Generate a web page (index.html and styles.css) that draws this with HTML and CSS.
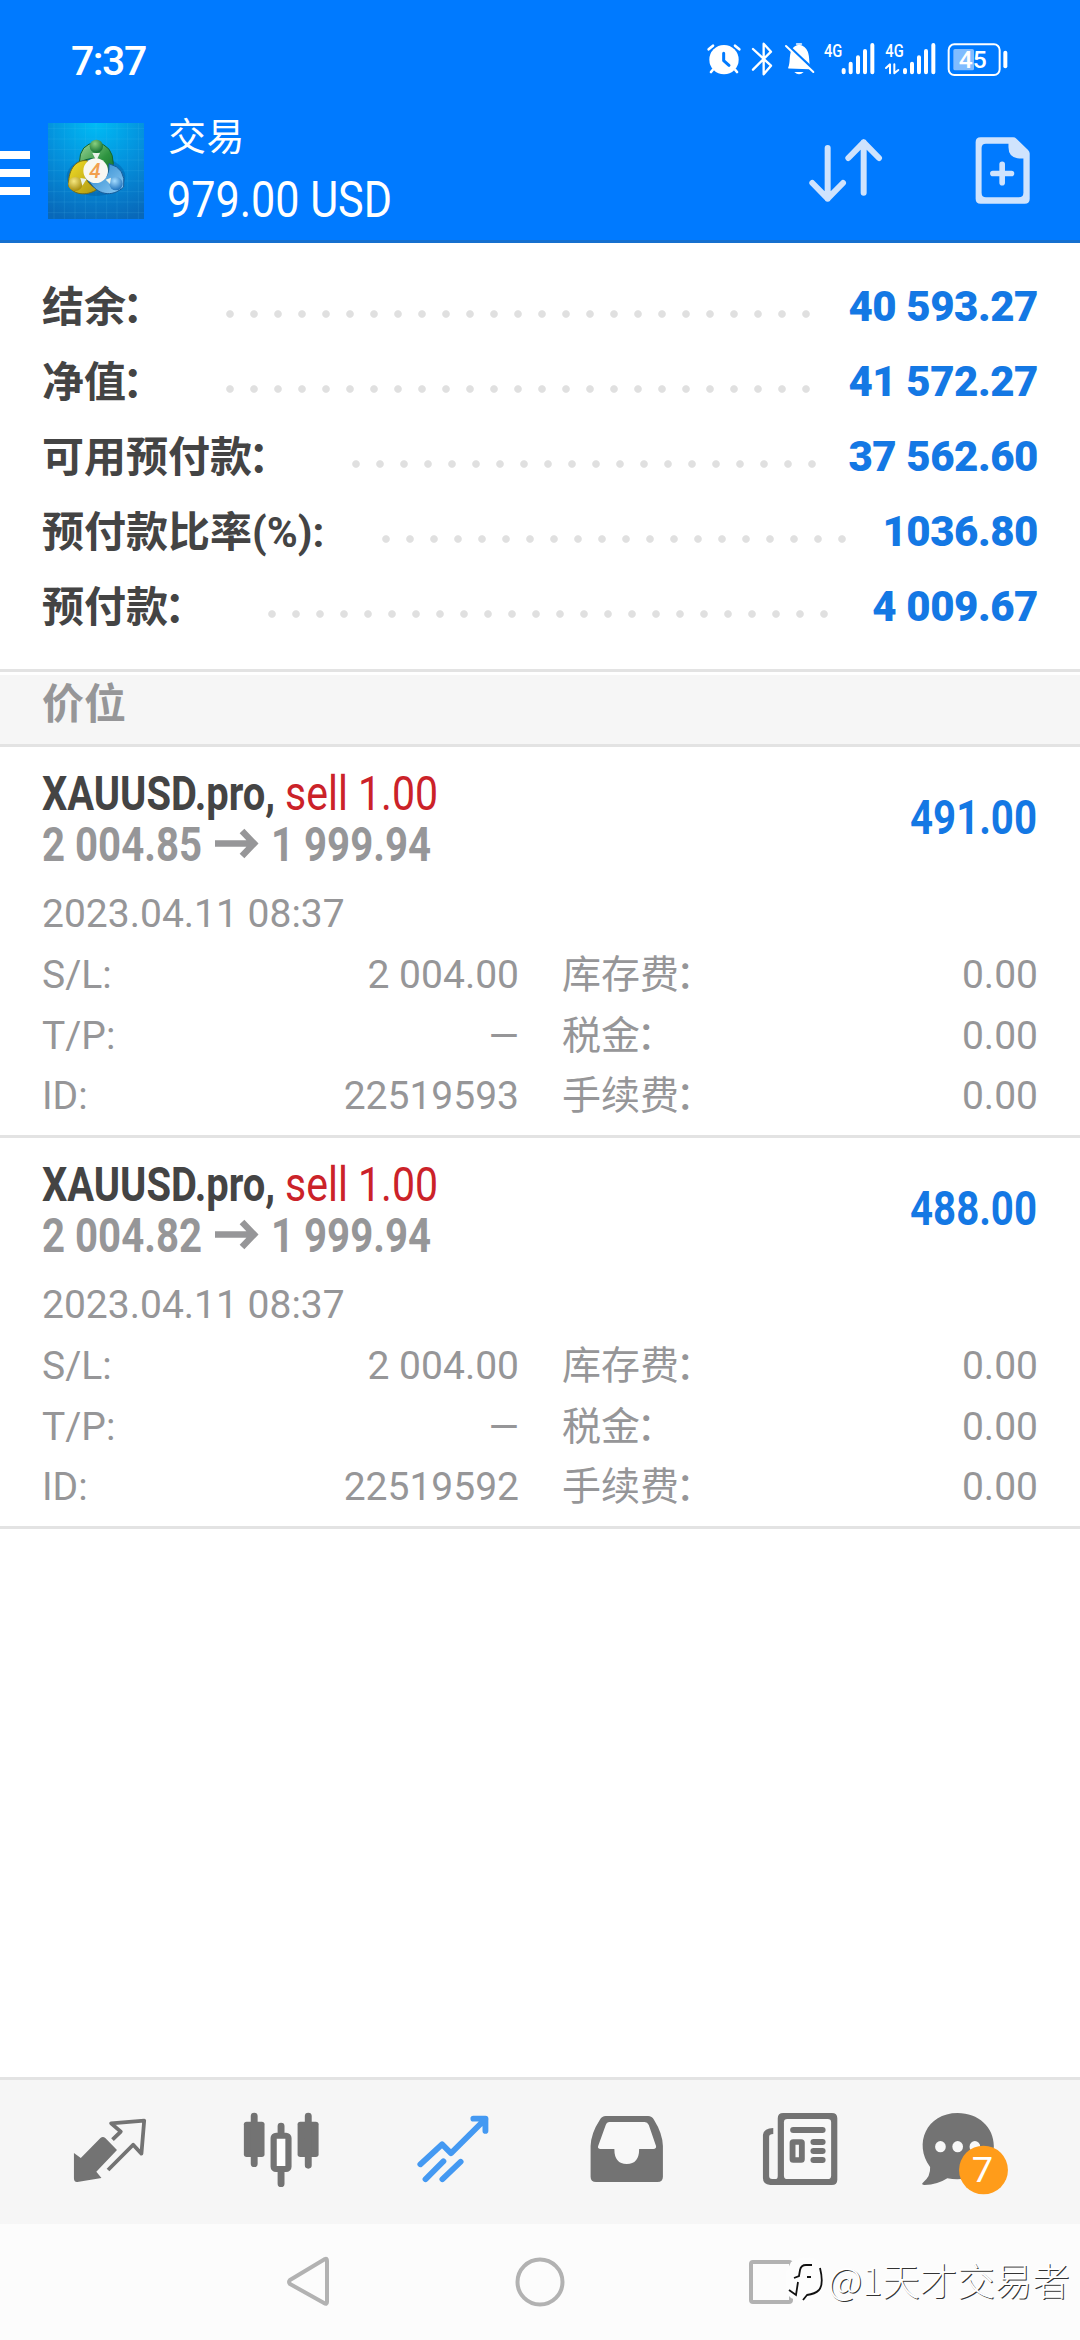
FILE: index.html
```
<!DOCTYPE html>
<html lang="zh-CN">
<head>
<meta charset="utf-8">
<title>交易</title>
<link rel="stylesheet" href="styles.css">
</head>
<body>
<div class="screen">
  <header class="header">
    <div class="status">
      <span class="clock">7:37</span>
      <svg class="status-icons" viewBox="78 60 912 114">
        <g fill="none" stroke="#fff" stroke-linecap="round" stroke-linejoin="round">
          <circle cx="132" cy="119" r="44" fill="#fff" stroke="none"/>
          <path d="M86 88L99 77M178 88L165 77M98 150L93 156M166 150L171 156" stroke-width="8"/>
          <path d="M131 100V122L147 136" stroke="#007aff" stroke-width="9"/>
          <path d="M219 87L273 137L251 163V71L273 95L219 149" stroke-width="7"/>
          <path d="M327 143C337 126 322 84 357 77C393 84 382 123 388 145Z" fill="#fff" stroke="#fff" stroke-width="5"/>
          <path d="M350 72H364" stroke-width="5"/>
          <path d="M343 156H371Q357 170 343 156Z" fill="#fff" stroke="none"/>
          <path d="M316 70L408 156" stroke="#007aff" stroke-width="9" stroke-linecap="butt"/>
          <path d="M318 78L400 156" stroke-width="6"/>
          <path d="M491 150V157M512 131V157M534 112V157M555 93V157M577 75V157M675 150V157M696 131V157M717 112V157M738 93V157M760 75V157" stroke-width="12"/>
          <path d="M618 144L630 133V160M643 133V160L655 150" stroke-width="6"/>
          <rect x="806" y="73" width="153" height="92" rx="17" stroke-width="6"/>
          <path d="M976 98V139" stroke-width="12"/>
        </g>
        <rect x="820" y="87" width="62" height="64" rx="5" fill="#80bcff"/>
        <g fill="#fff" font-family="Roboto, sans-serif" font-weight="500">
          <text x="432" y="111" font-size="53" textLength="55" lengthAdjust="spacingAndGlyphs">4G</text>
          <text x="616" y="111" font-size="53" textLength="55" lengthAdjust="spacingAndGlyphs">4G</text>
          <text x="836" y="143" font-size="70" textLength="84" lengthAdjust="spacingAndGlyphs">45</text>
        </g>
      </svg>
    </div>
    <div class="toolbar">
      <div class="menu"><i></i><i></i><i></i></div>
      <svg class="logo" viewBox="54 39 288 288">
        <defs>
          <radialGradient id="sky" cx=".5" cy="0" r="1.05"><stop offset="0" stop-color="#00bcf5"/><stop offset=".5" stop-color="#0490dc"/><stop offset="1" stop-color="#0868b9"/></radialGradient>
          <linearGradient id="green" x2="1" y2="1"><stop offset="0" stop-color="#9fd79b"/><stop offset=".6" stop-color="#2e9440"/><stop offset="1" stop-color="#17702c"/></linearGradient>
          <linearGradient id="gold" x2="1" y2="1"><stop offset="0" stop-color="#f3df28"/><stop offset="1" stop-color="#ac9510"/></linearGradient>
          <linearGradient id="blue" x2="1" y2="1"><stop offset="0" stop-color="#2482cb"/><stop offset="1" stop-color="#90cdf5"/></linearGradient>
          <radialGradient id="ballg" cx=".4" cy=".3" r=".7"><stop offset="0" stop-color="#8ad080"/><stop offset="1" stop-color="#147130"/></radialGradient>
          <radialGradient id="bally" cx=".4" cy=".3" r=".7"><stop offset="0" stop-color="#f6e880"/><stop offset="1" stop-color="#a78d0d"/></radialGradient>
          <radialGradient id="ballb" cx=".4" cy=".3" r=".7"><stop offset="0" stop-color="#a4dcff"/><stop offset="1" stop-color="#2174be"/></radialGradient>
        </defs>
        <path fill="url(#sky)" d="M54 39h288v288H54z"/>
        <path d="M72 39v288M103 39v288M135 39v288M166 39v288M198 39v288M230 39v288M261 39v288M293 39v288M325 39v288M54 55h288M54 87h288M54 118h288M54 150h288M54 182h288M54 213h288M54 245h288M54 276h288M54 308h288" stroke="#5bc8f2" stroke-opacity=".14" stroke-width="3"/>
        <ellipse cx="198" cy="200" rx="88" ry="58" fill="#034d91" opacity=".35"/>
        <path d="M148 158Q149 100 199 98Q249 105 250 161L237 193L215 154Q187 135 148 158Z" fill="url(#green)" stroke="#12652e" stroke-width="3"/>
        <path d="M173 152C132 147 113 187 116 229C140 265 188 250 202 237Q168 223 166 192Z" fill="url(#gold)" stroke="#736b15" stroke-width="3"/>
        <path d="M237 161Q289 174 281 231C244 265 202 253 178 215L210 214Q240 202 237 161Z" fill="url(#blue)" stroke="#155a98" stroke-width="3"/>
        <circle cx="199" cy="109" r="20" fill="url(#ballg)"/>
        <circle cx="136" cy="222" r="21" fill="url(#bally)"/>
        <circle cx="258" cy="221" r="20" fill="url(#ballb)"/>
        <path d="M187 129H210L199 152ZM151 204L157 227L170 207ZM227 209L243 203L240 222Z" fill="#e9f2e8"/>
        <circle cx="197" cy="182" r="37" fill="#f8f7f2"/>
        <text x="178" y="205" font-family="Roboto, sans-serif" font-size="62" font-weight="500" font-style="italic" fill="#f2a04f">4</text>
      </svg>
      <div class="heading">
        <div class="title">交易</div>
        <svg class="profit-total" viewBox="0 0 224 50"><text x="-1" y="43" font-size="50" textLength="225" lengthAdjust="spacingAndGlyphs">979.00 USD</text></svg>
      </div>
      <svg class="sort-icon" viewBox="388 354 222 195" fill="none" stroke="#cfe3fd" stroke-width="18" stroke-linecap="round" stroke-linejoin="round">
        <path d="M444 384V536M398 489L444 536L490 489M552 518V367M506 414L552 367L598 414"/>
      </svg>
      <svg class="new-icon" viewBox="884 352 164 202">
        <path fill-rule="evenodd" fill="#cfe3fd" d="M900 353H998Q1004 353 1008 357L1043 391Q1048 396 1048 402V538Q1048 553 1033 553H900Q885 553 885 538V368Q885 353 900 353ZM916 372Q903 372 903 385V520Q903 534 916 534H1015Q1029 534 1029 520V417H1017Q984 415 984 383V372Z"/>
        <path d="M937 462H993M965 434V490" stroke="#cfe3fd" stroke-width="17" stroke-linecap="round"/>
      </svg>
    </div>
  </header>

  <section class="summary">
    <div class="sum-row"><span class="label">结余<i class="colon">：</i></span><div class="leader"><i></i></div><b>40 593.27</b></div>
    <div class="sum-row"><span class="label">净值<i class="colon">：</i></span><div class="leader"><i></i></div><b>41 572.27</b></div>
    <div class="sum-row"><span class="label">可用预付款<i class="colon">：</i></span><div class="leader"><i></i></div><b>37 562.60</b></div>
    <div class="sum-row"><span class="label">预付款比率(%):</span><div class="leader"><i></i></div><b>1036.80</b></div>
    <div class="sum-row"><span class="label">预付款<i class="colon">：</i></span><div class="leader"><i></i></div><b>4 009.67</b></div>
  </section>

  <h2 class="section-title">价位</h2>

  <article class="position">
    <div class="position-head">
      <svg class="deal" viewBox="42 0 400 100" font-size="48">
        <text class="symbol" x="42" y="47" textLength="233" lengthAdjust="spacingAndGlyphs">XAUUSD.pro,</text>
        <text class="side" x="285" y="47" textLength="153" lengthAdjust="spacingAndGlyphs">sell 1.00</text>
        <text class="price" x="42" y="98" textLength="160" lengthAdjust="spacingAndGlyphs">2 004.85</text>
        <path class="arrow" d="M215 80.500H254M242 68L254 80.500L242 93"/>
        <text class="price" x="271" y="98" textLength="160" lengthAdjust="spacingAndGlyphs">1 999.94</text>
      </svg>
      <svg class="profit" viewBox="0 0 128 50"><text x="0" y="41" font-size="48" textLength="127" lengthAdjust="spacingAndGlyphs">491.00</text></svg>
    </div>
    <div class="date">2023.04.11 08:37</div>
    <div class="details">
      <div><span>S/L:</span><span>2 004.00</span></div><div><span>库存费<i class="colon">：</i></span><span>0.00</span></div>
      <div><span>T/P:</span><span>—</span></div><div><span>税金<i class="colon">：</i></span><span>0.00</span></div>
      <div><span>ID:</span><span>22519593</span></div><div><span>手续费<i class="colon">：</i></span><span>0.00</span></div>
    </div>
  </article>

  <article class="position">
    <div class="position-head">
      <svg class="deal" viewBox="42 0 400 100" font-size="48">
        <text class="symbol" x="42" y="47" textLength="233" lengthAdjust="spacingAndGlyphs">XAUUSD.pro,</text>
        <text class="side" x="285" y="47" textLength="153" lengthAdjust="spacingAndGlyphs">sell 1.00</text>
        <text class="price" x="42" y="98" textLength="160" lengthAdjust="spacingAndGlyphs">2 004.82</text>
        <path class="arrow" d="M215 80.500H254M242 68L254 80.500L242 93"/>
        <text class="price" x="271" y="98" textLength="160" lengthAdjust="spacingAndGlyphs">1 999.94</text>
      </svg>
      <svg class="profit" viewBox="0 0 128 50"><text x="0" y="41" font-size="48" textLength="127" lengthAdjust="spacingAndGlyphs">488.00</text></svg>
    </div>
    <div class="date">2023.04.11 08:37</div>
    <div class="details">
      <div><span>S/L:</span><span>2 004.00</span></div><div><span>库存费<i class="colon">：</i></span><span>0.00</span></div>
      <div><span>T/P:</span><span>—</span></div><div><span>税金<i class="colon">：</i></span><span>0.00</span></div>
      <div><span>ID:</span><span>22519592</span></div><div><span>手续费<i class="colon">：</i></span><span>0.00</span></div>
    </div>
  </article>

  <nav class="tabs">
    <svg viewBox="70 60 500 432" preserveAspectRatio="none">
      <path d="M215 279L235 294L292 234Q299 228 306 234L340 270L280 335L295 354L225 366Q215 367 215 355Z" fill="#737373"/>
      <path d="M327 239L351 215L323 190L419 182L411 281L387 254L314 330" fill="none" stroke="#737373" stroke-width="11" stroke-linejoin="round"/>
    </svg>
    <svg viewBox="570 60 500 432" preserveAspectRatio="none">
      <g fill="#737373"><rect x="709" y="185" width="60" height="106" rx="8"/><rect x="865" y="185" width="61" height="106" rx="8"/></g>
      <path d="M739 168V311M896 168V316M817 198V225M817 330V371" stroke="#737373" stroke-width="20" stroke-linecap="round"/>
      <rect x="795.500" y="227" width="43" height="100" rx="7" fill="#fff" stroke="#737373" stroke-width="18"/>
    </svg>
    <svg viewBox="1070 60 500 432" preserveAspectRatio="none" fill="none" stroke="#4499f2" stroke-width="17" stroke-linecap="round" stroke-linejoin="round">
      <path d="M1222 313L1285 253L1311 280L1411 177M1376 176H1411V213"/>
      <path d="M1237 358L1289 304M1286 358L1339 305"/>
    </svg>
    <svg viewBox="2 60 500 432" preserveAspectRatio="none">
      <path d="M190 168H313Q324 168 330 179Q355 220 356 258V350Q356 366 340 366H162Q146 366 146 350V258Q147 220 173 179Q179 168 190 168Z" fill="#737373"/>
      <path d="M201 186H303Q311 186 315 195L336 258Q338 266 328 267H287Q287 312 251 312Q215 312 215 267H175Q165 266 168 258L190 195Q193 186 201 186Z" fill="#f8f8f8"/>
    </svg>
    <svg viewBox="502 60 500 432" preserveAspectRatio="none">
      <path d="M677 204V222Q665 222 665 230V348Q665 357 674 357H686Q690 357 690 348V175Q690 159 706 159H847Q863 159 863 175V359Q863 375 847 375H668Q647 373 647 354V224Q650 205 677 204Z" fill="#737373"/>
      <rect x="708" y="177" width="137" height="180" rx="10" fill="#f8f8f8"/>
      <path d="M735 210H820M794 246H820M794 273H820M794 300H820" stroke="#737373" stroke-width="18" stroke-linecap="round"/>
      <rect x="733" y="246" width="27" height="54" rx="2" fill="#f8f8f8" stroke="#737373" stroke-width="17"/>
    </svg>
    <svg viewBox="1002 60 500 432" preserveAspectRatio="none">
      <path d="M1213 159C1273 159 1318 201 1318 258C1318 324 1260 370 1183 355Q1155 374 1117 375Q1106 373 1112 368Q1135 349 1133 321C1084 252 1122 159 1213 159Z" fill="#737373"/>
      <g fill="#f8f8f8"><ellipse cx="1163" cy="260" rx="15.500" ry="17"/><ellipse cx="1213" cy="260" rx="15.500" ry="17"/><ellipse cx="1263" cy="260" rx="15.500" ry="17"/></g>
      <ellipse cx="1288" cy="330" rx="71" ry="73" fill="#ff9c1a"/>
      <text x="1254" y="366" font-family="Roboto, sans-serif" font-size="106" textLength="62" lengthAdjust="spacingAndGlyphs" fill="#fff">7</text>
    </svg>
  </nav>

  <footer class="system-nav">
    <svg viewBox="0 0 46 54"><path d="M39 4Q41 3 41 6V47Q41 50 38 48L4 29Q2 27 4 25Z"/></svg>
    <svg viewBox="0 0 50 54"><circle cx="25" cy="27" r="22.500"/></svg>
    <svg viewBox="0 0 46 54"><rect x="3" y="7" width="40" height="40" rx="2"/></svg>
    <div class="watermark">
      <svg viewBox="0 0 42 48">
        <path d="M5 5Q22 -4 34 5Q41 20 37 34Q29 45 17 46L5 41Q-3 35 0 16Z" fill="#fdfdfd"/>
        <path d="M26 8H20Q15 8 14 13L13 19L8 21M21 20H25M12 25L10 38L3 33M34 11Q38 27 33 33Q29 37 21 38L17 43" fill="none" stroke="#111" stroke-width="1.800"/>
      </svg>
      <span>@1天才交易者</span>
    </div>
  </footer>
</div>
</body>
</html>
```
FILE: styles.css
```
* { box-sizing: border-box; }
body {
  margin: 0;
  font-family: Roboto, "Noto Sans CJK SC", sans-serif;
  background: #fff;
}
svg { display: block; flex: none; }
.screen {
  width: 1080px;
  height: 2340px;
  display: flex;
  flex-direction: column;
  overflow: hidden;
}

/* Header */
.header {
  height: 243px;
  flex: none;
  background: #007aff;
  border-bottom: 3px solid #1670cf;
  color: #fff;
}
.status {
  height: 116px;
  padding: 40px 74px 0 71px;
  display: flex;
  justify-content: space-between;
  align-items: flex-start;
}
.clock {
  font-size: 41px;
  line-height: 42px;
  font-weight: 500;
  letter-spacing: -1.500px;
}
.status-icons { width: 304px; height: 38px; margin-right: -4px; }
.toolbar { display: flex; align-items: flex-start; }
.menu {
  width: 30px;
  margin: 35px 18px 0 0;
  display: flex;
  flex-direction: column;
  gap: 10px;
}
.menu i { height: 8px; background: #fff; }
.logo { width: 96px; height: 96px; margin-top: 7px; }
.heading { margin-left: 24px; width: 224px; }
.title { font-size: 38px; line-height: 42px; letter-spacing: .5px; }
.profit-total { width: 224px; height: 50px; margin-top: 16px; overflow: visible; fill: #fff; }
.sort-icon { width: 74px; height: 65px; margin: 22px 0 0 417px; }
.new-icon { width: 55px; height: 67px; margin: 21px 0 0 92px; }

/* Account summary */
.summary {
  height: 429px;
  flex: none;
  padding: 25px 42px 0;
  border-bottom: 3px solid #e3e3e3;
}
.sum-row {
  height: 75px;
  display: flex;
  align-items: center;
  font-size: 42px;
  font-weight: 700;
  color: #444;
}
.label { margin-bottom: 4px; }
.sum-row b { color: #1478e4; letter-spacing: -.450px; margin-top: 1px; }
.colon { font-style: normal; margin: 0 .09em 0 -.09em; }
.leader { flex: 1; margin: 17px 17px 0 50px; }
.leader i {
  display: block;
  width: round(down, 100%, 24px);
  height: 8px;
  background: radial-gradient(circle at 12px 4px, #e0e0e0 3.300px, transparent 4.300px) 0 0 / 24px 8px;
}
.section-title {
  height: 75px;
  flex: none;
  margin: 0;
  padding: 0 42px;
  font-size: 42px;
  line-height: 60px;
  font-weight: 700;
  color: #969698;
  background: #f6f6f6;
  border-top: 3px solid #fff;
  border-bottom: 3px solid #e3e3e3;
}

/* Positions */
.position {
  height: 391px;
  flex: none;
  padding: 16px 42px 0;
  border-bottom: 3px solid #e3e3e3;
  color: #969698;
}
.position-head {
  height: 100px;
  display: flex;
  justify-content: space-between;
  align-items: center;
}
.deal { width: 400px; height: 100px; overflow: visible; }
.symbol { font-weight: 700; fill: #444; }
.side { fill: #cb2229; }
.price { font-weight: 700; fill: #969698; }
.arrow { fill: none; stroke: #969698; stroke-width: 6.500px; }
.profit { width: 128px; height: 50px; margin-top: 9px; overflow: visible; font-weight: 700; fill: #1478e4; }
.date { margin-top: 22px; font-size: 39px; line-height: 58px; }
.details {
  display: grid;
  grid-template-columns: 477px 476px;
  grid-auto-rows: 60.500px;
  column-gap: 43px;
  margin-top: 2px;
  font-size: 39px;
  line-height: 60px;
}
.details div { display: flex; justify-content: space-between; }

/* Bottom tabs */
.tabs {
  height: 147px;
  flex: none;
  margin-top: auto;
  padding-left: 24px;
  display: flex;
  background: #f6f6f6;
  border-top: 3px solid #e3e3e3;
}
.tabs svg { width: 172.200px; height: 144px; }

/* System navigation */
.system-nav {
  position: relative;
  height: 116px;
  flex: none;
  display: flex;
  justify-content: center;
  gap: 183px;
  padding-top: 31px;
  background: #fcfcfc;
}
.system-nav > svg { height: 54px; fill: none; stroke: #b2b2b2; stroke-width: 4px; stroke-linejoin: round; }
.watermark {
  position: absolute;
  left: 786px;
  top: 29px;
  display: flex;
  align-items: center;
}
.watermark svg { width: 42px; height: 48px; margin-top: 4px; }
.watermark span {
  font-family: "Noto Sans CJK SC", sans-serif;
  font-size: 37.500px;
  line-height: 46px;
  font-weight: 300;
  white-space: nowrap;
  color: #fff;
  text-shadow: 1px 1px 0 #333;
}
```
